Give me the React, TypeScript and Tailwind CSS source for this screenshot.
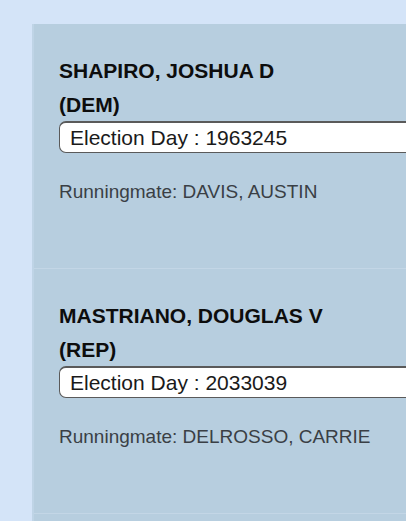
import React from "react";

const candidates = [
  { name: "SHAPIRO, JOSHUA D", party: "(DEM)", votes: "1963245", mate: "DAVIS, AUSTIN" },
  { name: "MASTRIANO, DOUGLAS V", party: "(REP)", votes: "2033039", mate: "DELROSSO, CARRIE" },
];

export default function App() {
  return (
    <div
      className="w-[406px] h-[521px] overflow-hidden bg-[#d4e4f8] pt-[24px] pl-[32px]"
      style={{ fontFamily: '"Liberation Sans", Arial, sans-serif' }}
    >
      <div className="w-[420px] h-[600px] bg-[#b7cedf] border-l-2 border-[#bfd4e6]">
        {candidates.map((c) => (
          <div key={c.name} className="h-[245px] border-b border-[#c3d6e6] pl-[25px] pt-[34px]">
            <div className="text-[21px] leading-[25px] font-bold text-[#0d0d0d]">{c.name}</div>
            <div className="mt-[9px] text-[21px] leading-[25px] font-bold text-[#0d0d0d]">{c.party}</div>
            <div className="mt-[4px] h-[32px] w-[400px] rounded-[7px] border border-t-2 border-[#5a5a5a] bg-white pl-[10px] text-[21px] leading-[30px] text-[#1a1a1a]">
              Election Day : {c.votes}
            </div>
            <div className="mt-[28px] text-[19px] leading-[22px] text-[#3a3f45]">Runningmate: {c.mate}</div>
          </div>
        ))}
      </div>
    </div>
  );
}
